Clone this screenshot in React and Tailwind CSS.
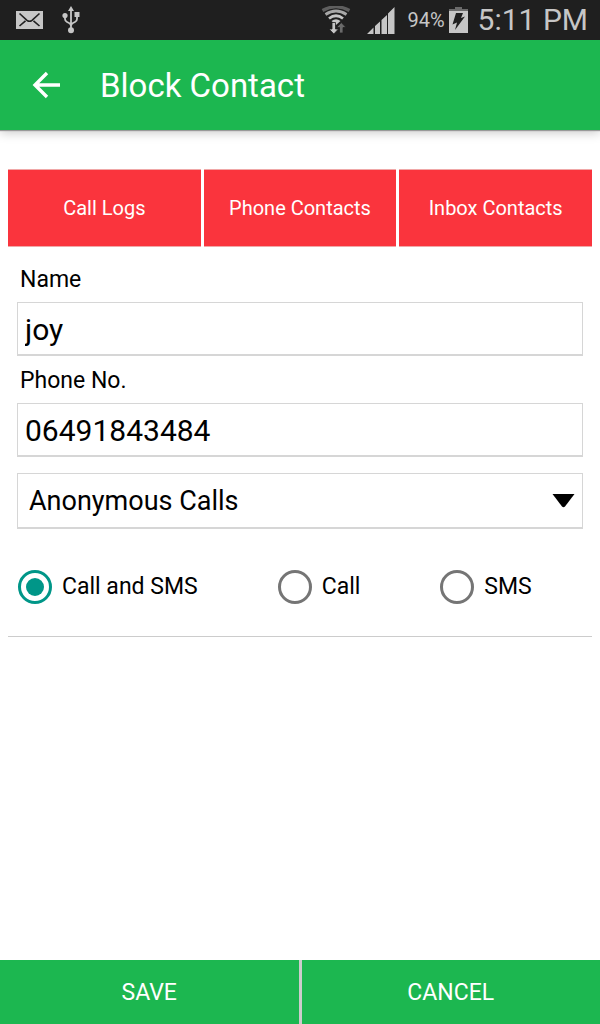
import { useState } from "react";

const sources = ["Call Logs", "Phone Contacts", "Inbox Contacts"];
const blockTypes = ["Call and SMS", "Call", "SMS"];

function StatusBar() {
  return (
    <div className="relative flex h-10 items-center justify-between bg-[#1f1f1f] pl-4 pr-3 text-[#c6c6c6]">
      <div className="flex items-center gap-[19px]">
        <svg width="27" height="18" viewBox="0 0 27 18">
          <rect width="27" height="18" fill="#c6c6c6" />
          <path
            d="M3.5 2.5L11 9.3Q13.5 11.3 16 9.3L23.5 2.5M3.5 15L9.5 9.8M23.5 15L17.5 9.8"
            fill="none"
            stroke="#1f1f1f"
            strokeWidth="1.6"
          />
        </svg>
        <svg width="18" height="28" viewBox="0 0 18 28">
          <path
            d="M9 4V24M3 10V13Q3 15 5 16L7 17Q9 18 9 20M15 9V13Q15 15 13 16L11 17Q9 18 9 20"
            fill="none"
            stroke="#c6c6c6"
            strokeWidth="1.8"
          />
          <path d="M9 0L12 5H6Z" fill="#c6c6c6" />
          <circle cx="3" cy="9.5" r="2.6" fill="#c6c6c6" />
          <rect x="12.5" y="6" width="5" height="5" fill="#c6c6c6" />
          <circle cx="9" cy="24.3" r="3" fill="#c6c6c6" />
        </svg>
      </div>
      <div className="flex items-center">
        <svg className="mr-4" width="30" height="28" viewBox="0 0 30 28">
          <g fill="none">
            <path d="M1.500 4.500Q15 -3 28.500 4.500" stroke="#5f5f5f" strokeWidth="3.200" />
            <path d="M4.500 8.500Q15 1.500 25.500 8.500" stroke="#a8a8a8" strokeWidth="2.800" />
            <path d="M8 12.500Q15 7 22 12.500" stroke="#c6c6c6" strokeWidth="2.800" />
          </g>
          <path d="M10.500 15Q15 11.500 19.500 15L15 19Z" fill="#c6c6c6" />
          <path
            d="M11 16.500H14.500V23H17.500L12.800 28L8 23H11Z"
            fill="#c6c6c6"
            stroke="#1f1f1f"
            strokeWidth="0.8"
          />
          <path
            d="M18.500 27V21.500H15.500L20.300 16.500L25 21.500H22V27Z"
            fill="#6a6a6a"
            stroke="#1f1f1f"
            strokeWidth="0.8"
          />
        </svg>
        <svg className="mr-3" width="28" height="27" viewBox="0 0 28 27">
          <path
            d="M0 27L6.500 20.500V27ZM8 27V19L13 14.500V27ZM14.500 27V13L20 8V27ZM21 27V6.500L27.500 0V27Z"
            fill="#c6c6c6"
          />
        </svg>
        <span className="text-xl leading-10">94%</span>
        <svg className="ml-1 mr-[10px]" width="19" height="26" viewBox="0 0 19 26">
          <rect x="6" width="7" height="3" fill="#6a6a6a" />
          <rect y="2" width="19" height="2" fill="#6a6a6a" />
          <rect y="4" width="19" height="22" fill="#c6c6c6" />
          <path
            d="M7 6H14L12 11L16 9.500L6 23L8 15.500L3.500 17.500Z"
            fill="#1f1f1f"
          />
        </svg>
        <span className="text-[30px] leading-10">5:11 PM</span>
      </div>
    </div>
  );
}

function Field({ id, label, type, value, onChange }) {
  return (
    <div>
      <label htmlFor={id} className="block px-[3px] pt-[2px] text-[23px] leading-[45px]">
        {label}
      </label>
      <input
        id={id}
        type={type}
        value={value}
        onChange={(e) => onChange(e.target.value)}
        className="block h-[54px] w-full border border-b-2 border-[#d6d6d6] px-[7px] pt-[2px] text-[30px] outline-none"
      />
    </div>
  );
}

function App() {
  const [name, setName] = useState("joy");
  const [phone, setPhone] = useState("06491843484");
  const [category, setCategory] = useState("Anonymous Calls");
  const [blockType, setBlockType] = useState("Call and SMS");

  return (
    <div className="flex min-h-screen flex-col bg-white font-['Roboto',sans-serif] text-black">
      <StatusBar />
      <header className="flex h-[90px] items-center bg-[#1cb750] px-8 text-white shadow-[0_1px_1px_#999999,0_3px_10px_#cccccc]">
        <button type="button" aria-label="Back">
          <svg width="30" height="28" viewBox="0 0 30 28">
            <path
              d="M28 14H4M15 2L3 14L15 26"
              fill="none"
              stroke="white"
              strokeWidth="3.4"
            />
          </svg>
        </button>
        <h1 className="ml-[38px] pt-[2px] text-[33px]">Block Contact</h1>
      </header>

      <main className="flex-1 px-2 pt-[39px]">
        <div className="grid grid-cols-3 gap-[3px]">
          {sources.map((source) => (
            <button
              key={source}
              type="button"
              className="h-[78px] border-y border-[#f0a8a8] bg-[#fa343d] text-xl text-white"
            >
              {source}
            </button>
          ))}
        </div>

        <div className="mx-[9px] mt-2">
          <Field id="name" label="Name" type="text" value={name} onChange={setName} />
          <Field id="phone" label="Phone No." type="tel" value={phone} onChange={setPhone} />
        </div>

        <div className="relative mx-[9px] mt-4">
          <select
            aria-label="Category"
            value={category}
            onChange={(e) => setCategory(e.target.value)}
            className="block h-14 w-full appearance-none border border-b-2 border-[#d6d6d6] bg-white px-[11px] pt-[2px] text-[27px] outline-none"
          >
            <option>Anonymous Calls</option>
          </select>
          <svg
            className="pointer-events-none absolute right-2 top-[21px]"
            width="23"
            height="14"
            viewBox="0 0 23 14"
          >
            <path d="M0.500 0H22.500L13 12.500Q11.500 14 10 12.500Z" fill="black" />
          </svg>
        </div>

        <div className="flex h-[108px] items-center gap-20 border-b border-[#cccccc] px-[10px] pt-2">
          {blockTypes.map((type) => (
            <label key={type} className="flex items-center gap-[10px] text-[23px]">
              <input
                type="radio"
                name="blockType"
                value={type}
                checked={blockType === type}
                onChange={() => setBlockType(type)}
                className="size-[34px] appearance-none rounded-full border-[3px] border-[#757575] bg-clip-content p-[5px] checked:border-[#009688] checked:bg-[#009688]"
              />
              <span className="pt-[2px]">{type}</span>
            </label>
          ))}
        </div>
      </main>

      <footer className="grid h-16 grid-cols-2 gap-[3px] bg-[#cccccc] text-[23px] text-white">
        <button type="button" className="bg-[#1cb750] pt-[3px]">
          SAVE
        </button>
        <button type="button" className="bg-[#1cb750] pt-[3px]">
          CANCEL
        </button>
      </footer>
    </div>
  );
}

export default App;
